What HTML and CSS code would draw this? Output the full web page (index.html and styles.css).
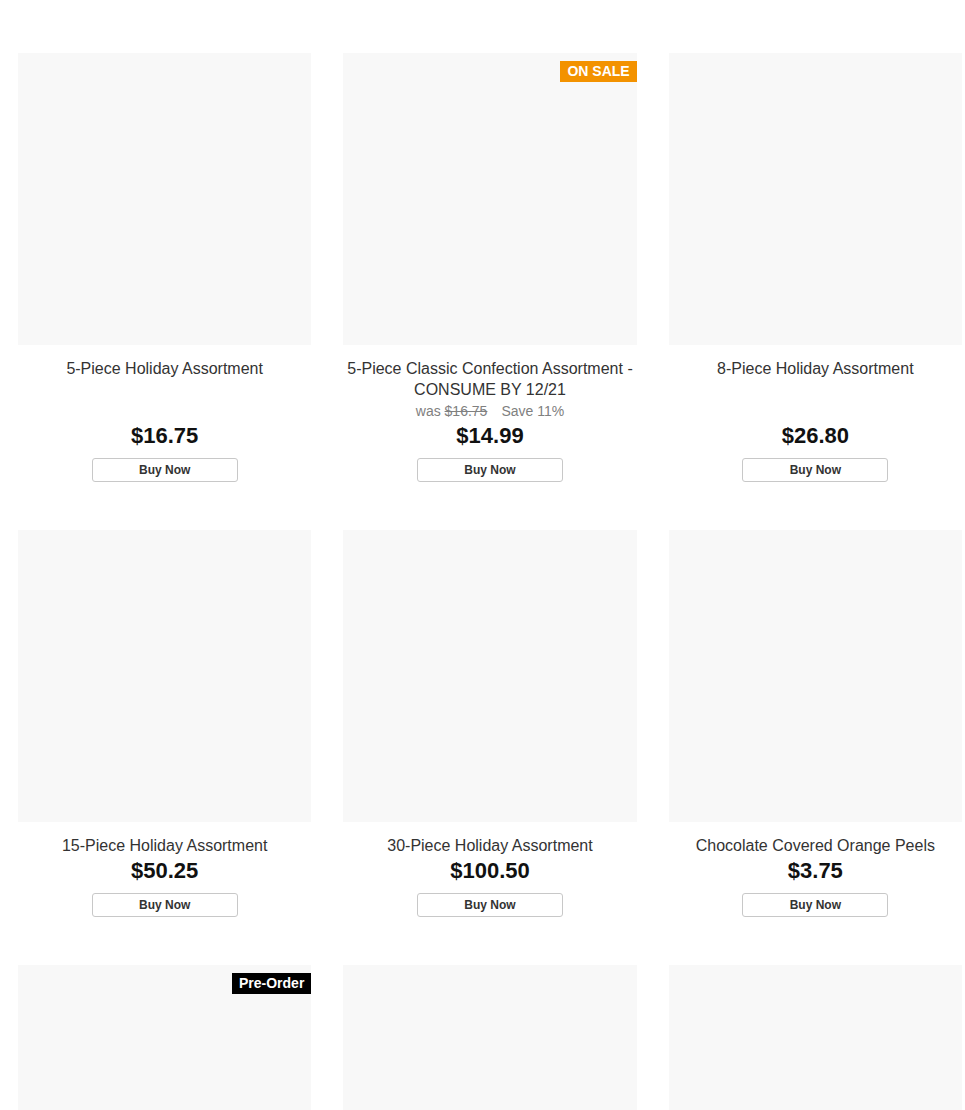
FILE: index.html
```html
<!DOCTYPE html>
<html lang="en">
<head>
<meta charset="utf-8">
<title>Holiday Assortments</title>
<link rel="stylesheet" href="styles.css">
</head>
<body>
<main class="grid">
  <div class="card">
    <div class="image"></div>
    <div class="title">5-Piece Holiday Assortment</div>
    <div class="price">$16.75</div>
    <button class="buy">Buy Now</button>
  </div>
  <div class="card">
    <div class="image"><span class="badge sale">ON SALE</span></div>
    <div class="title">5-Piece Classic Confection Assortment - CONSUME BY 12/21</div>
    <div class="was">was <s>$16.75</s><span class="save">Save 11%</span></div>
    <div class="price">$14.99</div>
    <button class="buy">Buy Now</button>
  </div>
  <div class="card">
    <div class="image"></div>
    <div class="title">8-Piece Holiday Assortment</div>
    <div class="price">$26.80</div>
    <button class="buy">Buy Now</button>
  </div>
  <div class="card">
    <div class="image"></div>
    <div class="title">15-Piece Holiday Assortment</div>
    <div class="price">$50.25</div>
    <button class="buy">Buy Now</button>
  </div>
  <div class="card">
    <div class="image"></div>
    <div class="title">30-Piece Holiday Assortment</div>
    <div class="price">$100.50</div>
    <button class="buy">Buy Now</button>
  </div>
  <div class="card">
    <div class="image"></div>
    <div class="title">Chocolate Covered Orange Peels</div>
    <div class="price">$3.75</div>
    <button class="buy">Buy Now</button>
  </div>
  <div class="card">
    <div class="image"><span class="badge pre">Pre-Order</span></div>
  </div>
  <div class="card">
    <div class="image"></div>
  </div>
  <div class="card">
    <div class="image"></div>
  </div>
</main>
</body>
</html>
```
FILE: styles.css
```css
html, body {
  margin: 0;
  padding: 0;
  background: #ffffff;
  font-family: "Liberation Sans", Arial, sans-serif;
}

.grid {
  display: grid;
  grid-template-columns: repeat(3, 1fr);
  column-gap: 32px;
  row-gap: 48px;
  width: 944px;
  padding: 53px 0 0 18px;
}

.card {
  display: flex;
  flex-direction: column;
  align-items: center;
  text-align: center;
}

.image {
  position: relative;
  width: 100%;
  height: 292px;
  background: #f8f8f8;
}

.badge {
  position: absolute;
  top: 8px;
  right: 0;
  height: 21px;
  line-height: 21px;
  padding: 0 7px;
  color: #ffffff;
  font-size: 14px;
  font-weight: bold;
}

.badge.sale {
  background: #f39200;
}

.badge.pre {
  background: #000000;
}

.title {
  margin-top: 13px;
  font-size: 16px;
  line-height: 21px;
  color: #333333;
}

.was {
  margin-top: 1px;
  font-size: 14px;
  line-height: 20px;
  color: #808080;
}

.was s {
  color: #808080;
}

.save {
  margin-left: 14px;
}

.price {
  margin-top: auto;
  padding-top: 1px;
  font-size: 22px;
  line-height: 28px;
  font-weight: bold;
  color: #111111;
}

.buy {
  margin-top: 8px;
  width: 146px;
  height: 24px;
  padding: 0;
  background: #ffffff;
  border: 1px solid #c8c8c8;
  border-radius: 3px;
  font-family: "Liberation Sans", Arial, sans-serif;
  font-size: 12px;
  font-weight: bold;
  color: #333333;
}
```
